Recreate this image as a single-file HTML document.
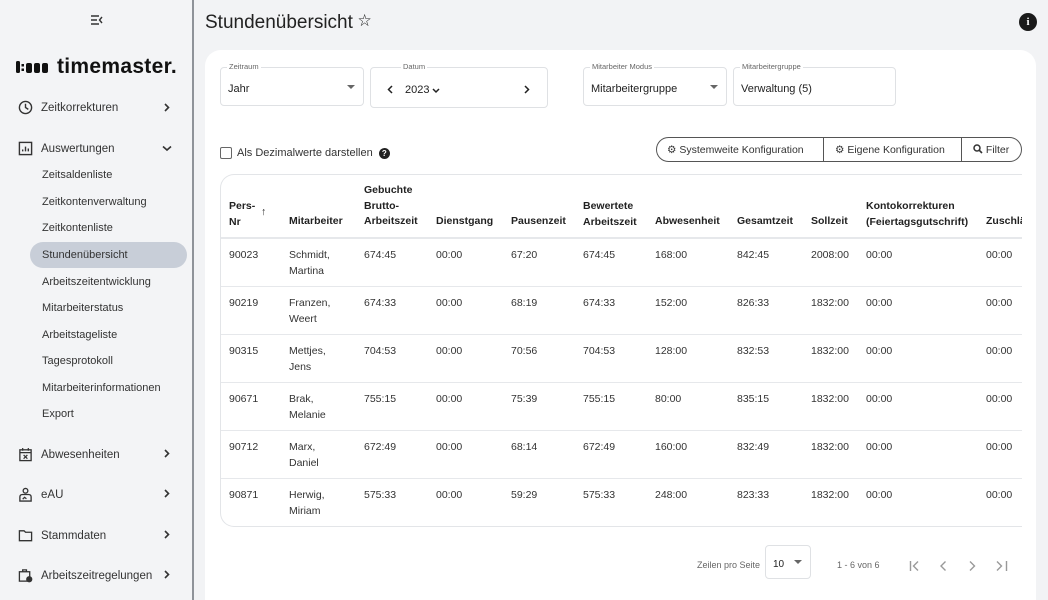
<!DOCTYPE html>
<html><head><meta charset="utf-8"><style>
*{box-sizing:border-box;margin:0;padding:0}
html,body{width:1048px;height:600px;overflow:hidden}
body{background:#f2f3f5;font-family:"Liberation Sans","Noto Sans CJK JP",sans-serif;color:#222;position:relative}
.a{position:absolute}
.side{left:0;top:0;width:194px;height:600px;border-right:2px solid #8f9399;background:#f3f4f6}
.nav{position:absolute;left:18px;font-size:11.5px;color:#333;display:flex;align-items:center}
.nav svg{margin-right:8px}
.chev{position:absolute;left:163px}
.sub{position:absolute;left:42px;font-size:11px;color:#333}
.card{left:205px;top:50px;width:831px;height:550px;background:#fff;border-radius:16px 16px 0 0}
.fld{position:absolute;border:1px solid #dfe1e4;border-radius:4px;height:39px;font-size:11px}
.fld .l{position:absolute;top:-6px;left:6px;background:#fff;padding:0 2px;font-size:7.5px;color:#666}
.fld .v{position:absolute;top:15px;left:7px;color:#222}
.tri{position:absolute;top:17px;width:0;height:0;border-left:4px solid transparent;border-right:4px solid transparent;border-top:4px solid #666}
.tbl{left:220px;top:174px;width:802px;height:353px;border:1px solid #e3e5e8;border-right:none;border-radius:14px 0 0 14px;overflow:hidden}
.h{position:absolute;font-size:10.5px;font-weight:bold;color:#222;line-height:15.5px}
.c{position:absolute;font-size:10.5px;color:#333;line-height:15.5px}
.rl{position:absolute;left:0;width:802px;height:1px;background:#e6e8eb}
</style></head><body>
<div class="a side">
 <div class="a" style="left:90px;top:14px;font-size:12px">
  <svg width="14" height="12" viewBox="0 0 14 12"><path d="M1 2h8M1 6h6M1 10h8M12 3l-2.5 3 2.5 3" stroke="#333" stroke-width="1.4" fill="none"/></svg></div>
 <div class="a" style="left:16px;top:55px;display:flex;align-items:center">
  <svg width="36" height="16" viewBox="0 0 36 16"><rect x="0" y="2" width="4" height="12" rx="1.5" fill="#111"/><rect x="5.5" y="5" width="2.5" height="2.5" fill="#111"/><rect x="5.5" y="9.5" width="2.5" height="2.5" fill="#111"/><rect x="10" y="4" width="6" height="10" rx="2" fill="#111"/><rect x="18" y="4" width="6" height="10" rx="2" fill="#111"/><rect x="26" y="4" width="6" height="10" rx="2" fill="#111"/></svg>
  <span style="font-size:21px;font-weight:bold;margin-left:5px;letter-spacing:0.3px;color:#111">timemaster.</span></div>
 <div class="nav" style="top:100px"><svg width="15" height="15" viewBox="0 0 16 16"><circle cx="8" cy="8" r="6.5" stroke="#333" stroke-width="1.5" fill="none"/><path d="M8 4v4l3 2" stroke="#333" stroke-width="1.5" fill="none"/></svg>Zeitkorrekturen</div>
 <svg class="chev" style="top:103px" width="8" height="9" viewBox="0 0 8 9"><path d="M2 1l3.5 3.5L2 8" stroke="#333" stroke-width="1.6" fill="none"/></svg>
 <div class="nav" style="top:141px"><svg width="15" height="15" viewBox="0 0 16 16"><rect x="1.5" y="1.5" width="13" height="13" stroke="#333" stroke-width="1.5" fill="none"/><path d="M5 11v-2M8 11V6M11 11V8" stroke="#333" stroke-width="1.5"/></svg>Auswertungen</div>
 <svg class="chev" style="top:145px;left:162px" width="10" height="7" viewBox="0 0 10 7"><path d="M1 1.5l4 3.5 4-3.5" stroke="#333" stroke-width="1.6" fill="none"/></svg>
 <div class="sub" style="top:169px">Zeitsaldenliste</div>
 <div class="sub" style="top:196px">Zeitkontenverwaltung</div>
 <div class="sub" style="top:222px">Zeitkontenliste</div>
 <div class="a" style="left:30px;top:242px;width:157px;height:26px;border-radius:13px;background:#c8ced8"></div>
 <div class="sub" style="top:249px">Stundenübersicht</div>
 <div class="sub" style="top:276px">Arbeitszeitentwicklung</div>
 <div class="sub" style="top:302px">Mitarbeiterstatus</div>
 <div class="sub" style="top:329px">Arbeitstageliste</div>
 <div class="sub" style="top:355px">Tagesprotokoll</div>
 <div class="sub" style="top:382px">Mitarbeiterinformationen</div>
 <div class="sub" style="top:408px">Export</div>
 <div class="nav" style="top:447px"><svg width="15" height="15" viewBox="0 0 16 16"><rect x="2" y="3" width="12" height="11.5" stroke="#333" stroke-width="1.4" fill="none"/><path d="M2 6h12M5 1v3M11 1v3M6 8.5l4 4M10 8.5l-4 4" stroke="#333" stroke-width="1.3"/></svg>Abwesenheiten</div>
 <svg class="chev" style="top:449px" width="8" height="9" viewBox="0 0 8 9"><path d="M2 1l3.5 3.5L2 8" stroke="#333" stroke-width="1.6" fill="none"/></svg>
 <div class="nav" style="top:487px"><svg width="15" height="15" viewBox="0 0 16 16"><circle cx="8" cy="4" r="2.5" stroke="#333" stroke-width="1.4" fill="none"/><path d="M2 15v-4.5q0-2.5 3-2.5h6q3 0 3 2.5V15zM5 13l2-2 2 1.5" stroke="#333" stroke-width="1.4" fill="none"/></svg>eAU</div>
 <svg class="chev" style="top:489px" width="8" height="9" viewBox="0 0 8 9"><path d="M2 1l3.5 3.5L2 8" stroke="#333" stroke-width="1.6" fill="none"/></svg>
 <div class="nav" style="top:528px"><svg width="15" height="15" viewBox="0 0 16 16"><path d="M1.5 3h5l1.5 1.5h6.5v9h-13z" stroke="#333" stroke-width="1.4" fill="none"/></svg>Stammdaten</div>
 <svg class="chev" style="top:530px" width="8" height="9" viewBox="0 0 8 9"><path d="M2 1l3.5 3.5L2 8" stroke="#333" stroke-width="1.6" fill="none"/></svg>
 <div class="nav" style="top:568px"><svg width="15" height="15" viewBox="0 0 16 16"><rect x="1.5" y="4" width="11" height="10" stroke="#333" stroke-width="1.4" fill="none"/><path d="M5 4V2h4v2" stroke="#333" stroke-width="1.4" fill="none"/><circle cx="12" cy="12" r="3.3" fill="#333"/></svg>Arbeitszeitregelungen</div>
 <svg class="chev" style="top:570px" width="8" height="9" viewBox="0 0 8 9"><path d="M2 1l3.5 3.5L2 8" stroke="#333" stroke-width="1.6" fill="none"/></svg>
</div>

<div class="a" style="left:205px;top:10px;font-size:19px;color:#222">Stundenübersicht <span style="font-size:13px;vertical-align:3px">&#x2606;</span></div>
<div class="a" style="left:1019px;top:13px;width:18px;height:18px;border-radius:50%;background:#1a1a1a;color:#fff;font-size:11px;font-weight:bold;text-align:center;line-height:18px;font-family:'Liberation Serif',serif">i</div>

<div class="a card"></div>
<div class="fld" style="left:220px;top:67px;width:144px"><span class="l">Zeitraum</span><span class="v">Jahr</span><span class="tri" style="left:126px"></span></div>
<div class="fld" style="left:370px;top:67px;width:178px;height:41px"><span class="l" style="left:30px">Datum</span>
 <svg class="a" style="left:16px;top:17px" width="6" height="9" viewBox="0 0 6 9"><path d="M5 1L1.5 4.5 5 8" stroke="#222" stroke-width="1.5" fill="none"/></svg>
 <span class="v" style="left:34px;top:16px">2023</span>
 <svg class="a" style="left:61px;top:20px" width="8" height="6" viewBox="0 0 8 6"><path d="M1 1l3 3 3-3" stroke="#222" stroke-width="1.5" fill="none"/></svg>
 <svg class="a" style="left:153px;top:17px" width="6" height="9" viewBox="0 0 6 9"><path d="M1 1l3.5 3.5L1 8" stroke="#222" stroke-width="1.5" fill="none"/></svg></div>
<div class="fld" style="left:583px;top:67px;width:144px"><span class="l">Mitarbeiter Modus</span><span class="v">Mitarbeitergruppe</span><span class="tri" style="left:126px"></span></div>
<div class="fld" style="left:733px;top:67px;width:163px"><span class="l">Mitarbeitergruppe</span><span class="v">Verwaltung (5)</span></div>

<div class="a" style="left:220px;top:147px;width:12px;height:12px;border:1.5px solid #666;border-radius:2px"></div>
<div class="a" style="left:237px;top:147px;font-size:11px;color:#333">Als Dezimalwerte darstellen <span style="display:inline-block;width:11px;height:11px;border-radius:50%;background:#222;color:#fff;font-size:8px;font-weight:bold;text-align:center;line-height:11px;margin-left:3px">?</span></div>

<div class="a" style="left:656px;top:137px;width:366px;height:25px;border:1px solid #555;border-radius:13px;font-size:10.5px;color:#333">
 <div class="a" style="left:10px;top:6px">&#x2699;&#xFE0E; Systemweite Konfiguration</div>
 <div class="a" style="left:166px;top:0;width:1px;height:23px;background:#555"></div>
 <div class="a" style="left:178px;top:6px">&#x2699;&#xFE0E; Eigene Konfiguration</div>
 <div class="a" style="left:304px;top:0;width:1px;height:23px;background:#555"></div>
 <div class="a" style="left:316px;top:6px"><svg width="10" height="10" viewBox="0 0 10 10" style="vertical-align:-1px"><circle cx="4" cy="4" r="3" stroke="#333" stroke-width="1.5" fill="none"/><path d="M6.3 6.3L9 9" stroke="#333" stroke-width="1.6"/></svg> Filter</div>
</div>

<div class="a tbl">
 <div class="h" style="left:8px;top:24px">Pers-<br>Nr</div>
 <div class="h" style="left:40px;top:30px;font-weight:normal">&#x2191;</div>
 <div class="h" style="left:68px;top:39px">Mitarbeiter</div>
 <div class="h" style="left:143px;top:8px">Gebuchte<br>Brutto-<br>Arbeitszeit</div>
 <div class="h" style="left:215px;top:39px">Dienstgang</div>
 <div class="h" style="left:290px;top:39px">Pausenzeit</div>
 <div class="h" style="left:362px;top:24px">Bewertete<br>Arbeitszeit</div>
 <div class="h" style="left:434px;top:39px">Abwesenheit</div>
 <div class="h" style="left:516px;top:39px">Gesamtzeit</div>
 <div class="h" style="left:590px;top:39px">Sollzeit</div>
 <div class="h" style="left:645px;top:24px">Kontokorrekturen<br>(Feiertagsgutschrift)</div>
 <div class="h" style="left:765px;top:39px;white-space:nowrap">Zuschläge</div>
 <div class="rl" style="top:62px;height:2px"></div>
 <div class="rl" style="top:111px"></div><div class="rl" style="top:159px"></div><div class="rl" style="top:207px"></div><div class="rl" style="top:255px"></div><div class="rl" style="top:303px"></div>

 <div class="c" style="left:8px;top:73px">90023</div><div class="c" style="left:68px;top:73px">Schmidt,<br>Martina</div><div class="c" style="left:143px;top:73px">674:45</div><div class="c" style="left:215px;top:73px">00:00</div><div class="c" style="left:290px;top:73px">67:20</div><div class="c" style="left:362px;top:73px">674:45</div><div class="c" style="left:434px;top:73px">168:00</div><div class="c" style="left:516px;top:73px">842:45</div><div class="c" style="left:590px;top:73px">2008:00</div><div class="c" style="left:645px;top:73px">00:00</div><div class="c" style="left:765px;top:73px">00:00</div>

 <div class="c" style="left:8px;top:121px">90219</div><div class="c" style="left:68px;top:121px">Franzen,<br>Weert</div><div class="c" style="left:143px;top:121px">674:33</div><div class="c" style="left:215px;top:121px">00:00</div><div class="c" style="left:290px;top:121px">68:19</div><div class="c" style="left:362px;top:121px">674:33</div><div class="c" style="left:434px;top:121px">152:00</div><div class="c" style="left:516px;top:121px">826:33</div><div class="c" style="left:590px;top:121px">1832:00</div><div class="c" style="left:645px;top:121px">00:00</div><div class="c" style="left:765px;top:121px">00:00</div>

 <div class="c" style="left:8px;top:169px">90315</div><div class="c" style="left:68px;top:169px">Mettjes,<br>Jens</div><div class="c" style="left:143px;top:169px">704:53</div><div class="c" style="left:215px;top:169px">00:00</div><div class="c" style="left:290px;top:169px">70:56</div><div class="c" style="left:362px;top:169px">704:53</div><div class="c" style="left:434px;top:169px">128:00</div><div class="c" style="left:516px;top:169px">832:53</div><div class="c" style="left:590px;top:169px">1832:00</div><div class="c" style="left:645px;top:169px">00:00</div><div class="c" style="left:765px;top:169px">00:00</div>

 <div class="c" style="left:8px;top:217px">90671</div><div class="c" style="left:68px;top:217px">Brak,<br>Melanie</div><div class="c" style="left:143px;top:217px">755:15</div><div class="c" style="left:215px;top:217px">00:00</div><div class="c" style="left:290px;top:217px">75:39</div><div class="c" style="left:362px;top:217px">755:15</div><div class="c" style="left:434px;top:217px">80:00</div><div class="c" style="left:516px;top:217px">835:15</div><div class="c" style="left:590px;top:217px">1832:00</div><div class="c" style="left:645px;top:217px">00:00</div><div class="c" style="left:765px;top:217px">00:00</div>

 <div class="c" style="left:8px;top:265px">90712</div><div class="c" style="left:68px;top:265px">Marx,<br>Daniel</div><div class="c" style="left:143px;top:265px">672:49</div><div class="c" style="left:215px;top:265px">00:00</div><div class="c" style="left:290px;top:265px">68:14</div><div class="c" style="left:362px;top:265px">672:49</div><div class="c" style="left:434px;top:265px">160:00</div><div class="c" style="left:516px;top:265px">832:49</div><div class="c" style="left:590px;top:265px">1832:00</div><div class="c" style="left:645px;top:265px">00:00</div><div class="c" style="left:765px;top:265px">00:00</div>

 <div class="c" style="left:8px;top:313px">90871</div><div class="c" style="left:68px;top:313px">Herwig,<br>Miriam</div><div class="c" style="left:143px;top:313px">575:33</div><div class="c" style="left:215px;top:313px">00:00</div><div class="c" style="left:290px;top:313px">59:29</div><div class="c" style="left:362px;top:313px">575:33</div><div class="c" style="left:434px;top:313px">248:00</div><div class="c" style="left:516px;top:313px">823:33</div><div class="c" style="left:590px;top:313px">1832:00</div><div class="c" style="left:645px;top:313px">00:00</div><div class="c" style="left:765px;top:313px">00:00</div>
</div>

<div class="a" style="left:697px;top:560px;font-size:9px;color:#666">Zeilen pro Seite</div>
<div class="a" style="left:765px;top:545px;width:46px;height:34px;border:1px solid #dfe1e4;border-radius:4px"><span class="a" style="left:7px;top:13px;font-size:10px">10</span><span class="tri" style="left:28px;top:14px"></span></div>
<div class="a" style="left:837px;top:560px;font-size:9px;color:#666">1 - 6 von 6</div>
<svg class="a" style="left:909px;top:560px" width="100" height="12" viewBox="0 0 100 12">
 <g stroke="#999" stroke-width="1.4" fill="none">
  <path d="M1.5 1v10M9 1.5L4.5 6 9 10.5"/>
  <path d="M36.5 1.5L32 6l4.5 4.5"/>
  <path d="M61 1.5L65.5 6 61 10.5"/>
  <path d="M88 1.5L92.5 6 88 10.5M97.5 1v10"/>
 </g></svg>
</body></html>
